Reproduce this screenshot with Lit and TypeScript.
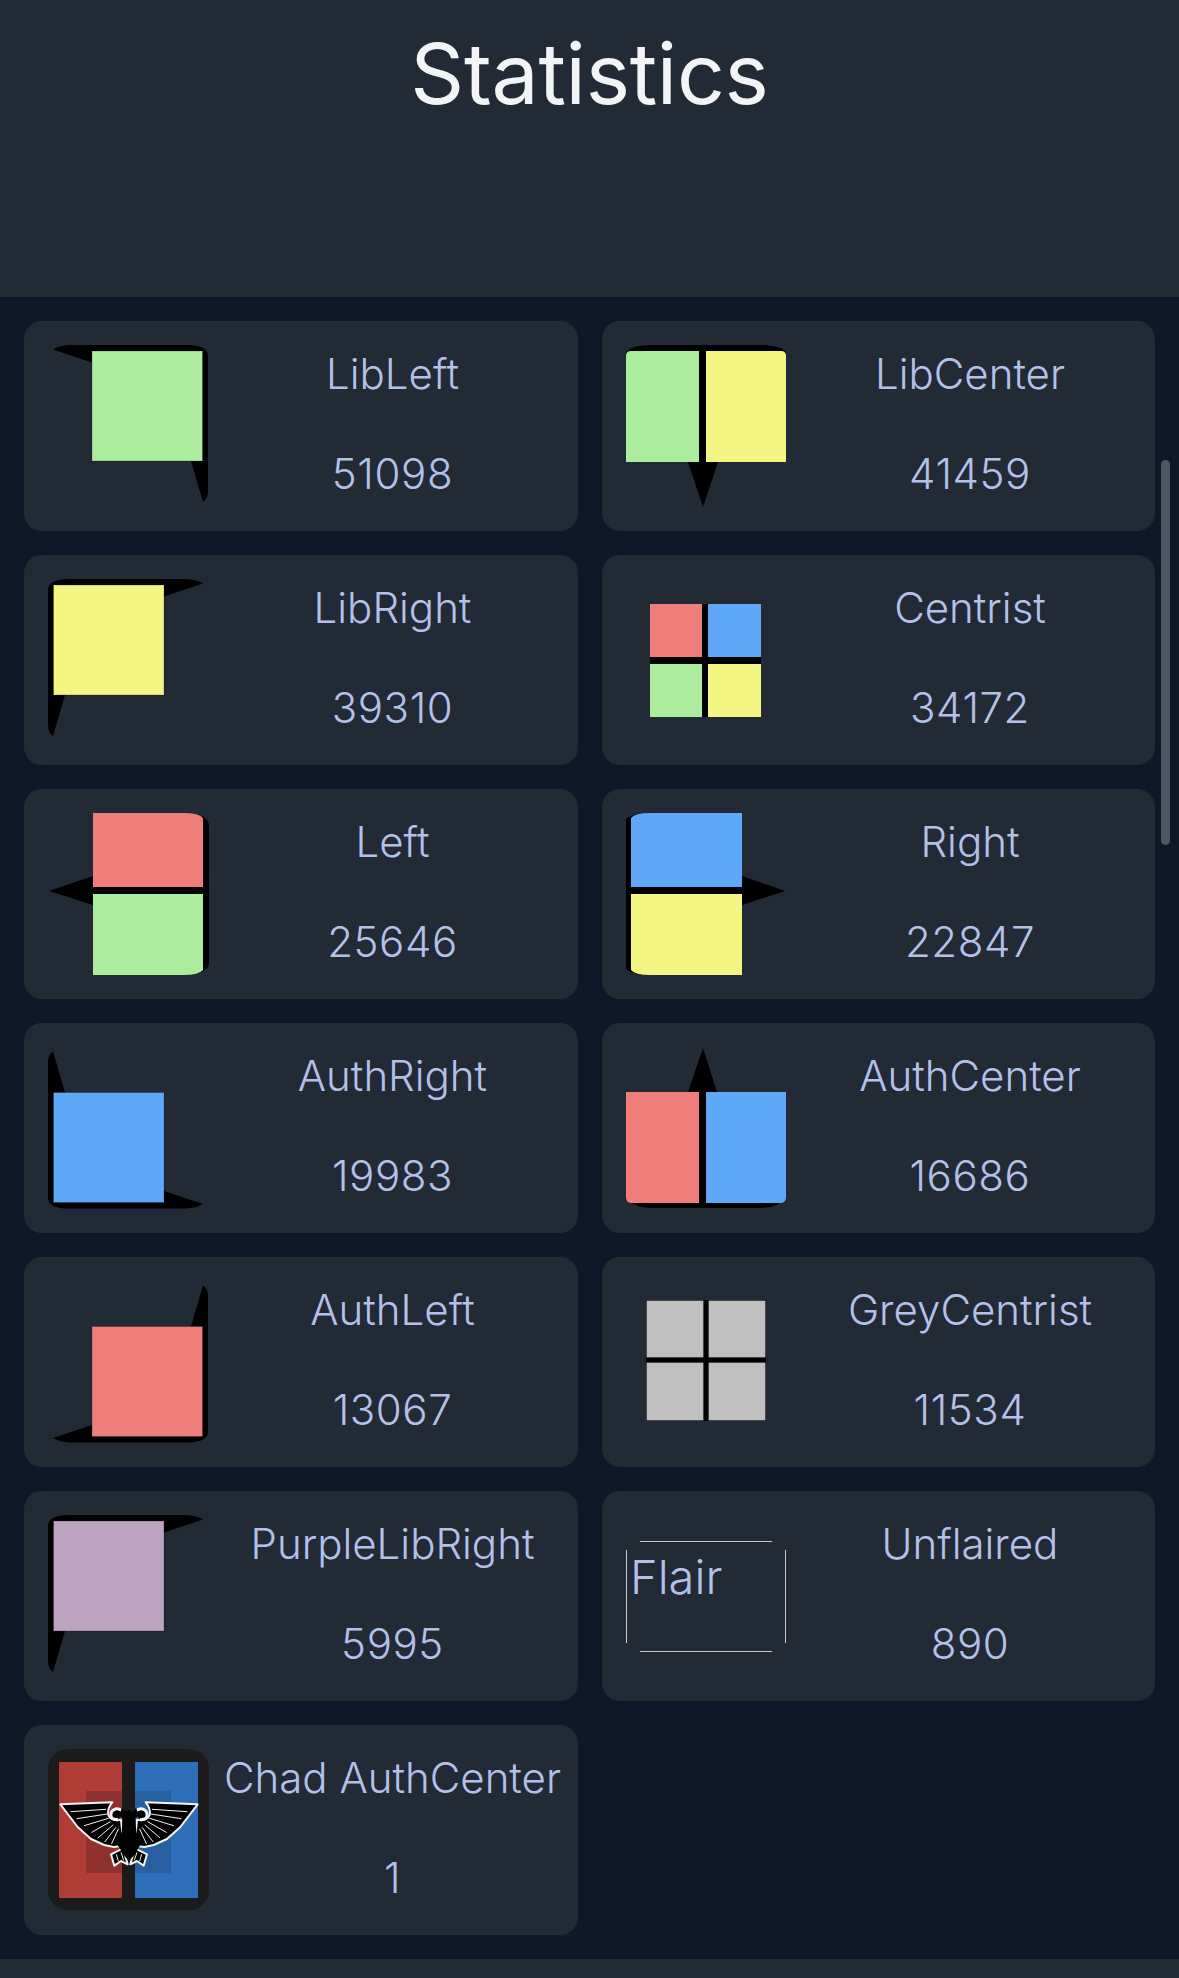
import { LitElement, html, css, svg } from "lit";
import { customElement } from "lit/decorators.js";

const G = "#acec9e", Y = "#f5f583", R = "#ef7e7a", B = "#5fa8f8", GREY = "#c0c0c0", P = "#bda2c2";
const EDGE = "rgba(0,0,0,.22)";

const rect = (x: number, y: number, w: number, h: number, fill: string, extra = "") =>
  svg`<rect x=${x + 0.5} y=${y + 0.5} width=${w - 1} height=${h - 1} fill=${fill} stroke=${extra || EDGE} stroke-width="1" />`;

/* A single square with a black corner frame; flips give the four quadrants. */
const corner = (fill: string, flipX: boolean, flipY: boolean) => {
  const t = `translate(${flipX ? 160 : 0} ${flipY ? 161.5 : 0}) scale(${flipX ? -1 : 1} ${flipY ? -1 : 1})`;
  return svg`<g transform=${t}>
    <path d="M0 147 L0 10 Q1 1 18 0 L139 0 Q150 1 155 4.5 L116 17.5 L100 40 L40 100 L17 116 L5 157 Q0 153 0 147 Z" fill="#000" />
    ${rect(5, 5.5, 111.5, 111, fill)}
  </g>`;
};

const icons: Record<string, () => unknown> = {
  libLeft: () => corner(G, true, false),
  libRight: () => corner(Y, false, false),
  authRight: () => corner(B, false, true),
  authLeft: () => corner(R, true, true),
  purple: () => corner(P, false, false),
  libCenter: () => svg`
    <path d="M0 8 Q3 1 23 0 L137 0 Q157 1 160 8 L160 40 L0 40 Z" fill="#000" />
    <rect x="73" y="30" width="7" height="90" fill="#000" />
    <path d="M62 117 L92 117 L77 162 Z" fill="#000" />
    <path d="M0 11 Q0 6 5 6 L73 6 L73 117 L0 117 Z" fill=${G} />
    <path d="M80 6 L155 6 Q160 6 160 11 L160 117 L80 117 Z" fill=${Y} />`,
  authCenter: () => svg`
    <path d="M1 150 Q6 160 24 161 L136 161 Q154 160 159 150 Z" fill="#000" />
    <rect x="73" y="40" width="7" height="120" fill="#000" />
    <path d="M62 45 L91 45 L77 1 Z" fill="#000" />
    <path d="M0 45 L73 45 L73 156 L6 156 Q0 156 0 150 Z" fill=${R} />
    <path d="M80 45 L160 45 L160 150 Q160 156 154 156 L80 156 Z" fill=${B} />`,
  left: () => svg`
    <path d="M45 0 L138 0 Q160 1 161 12 L161 150 Q160 161 138 162 L45 162 Z" fill="#000" />
    <path d="M1 78 L45 63 L45 92 Z" fill="#000" />
    <path d="M45 0 L136 0 Q151 0 155 5 L155 74 L45 74 Z" fill=${R} />
    <path d="M45 81 L155 81 L155 157 Q151 162 136 162 L45 162 Z" fill=${G} />`,
  right: () => svg`
    <path d="M116 0 L24 0 Q2 1 0 7 L0 155 Q2 161 24 162 L116 162 Z" fill="#000" />
    <path d="M116 63 L159 78 L116 92 Z" fill="#000" />
    <path d="M116 0 L24 0 Q9 0 5 5 L5 74 L116 74 Z" fill=${B} />
    <path d="M116 81 L5 81 L5 157 Q9 162 24 162 L116 162 Z" fill=${Y} />`,
  centrist: () => svg`
    <rect x="24" y="25" width="111" height="113" fill="#000" />
    <rect x="24" y="25" width="52" height="53" fill=${R} />
    <rect x="82" y="25" width="53" height="53" fill=${B} />
    <rect x="24" y="85" width="52" height="53" fill=${G} />
    <rect x="82" y="85" width="53" height="53" fill=${Y} />`,
  grey: () => svg`
    <rect x="20" y="19" width="120" height="121" fill="#000" />
    ${rect(20, 19, 58, 58, GREY, "rgba(34,41,54,.45)")}
    ${rect(82, 19, 58, 58, GREY, "rgba(34,41,54,.45)")}
    ${rect(20, 81, 58, 59, GREY, "rgba(34,41,54,.45)")}
    ${rect(82, 81, 58, 59, GREY, "rgba(34,41,54,.45)")}`,
  chad: () => svg`
    <rect x="0" y="0" width="161" height="161" rx="20" fill="#1b1b1c" />
    <rect x="11" y="13" width="63" height="136" fill="#b03c36" />
    <rect x="87" y="13" width="63" height="136" fill="#2e6db8" />
    <rect x="38" y="42" width="36" height="82" fill="#8f322d" />
    <rect x="74" y="42" width="13" height="82" fill="#1b1b1c" />
    <rect x="87" y="42" width="36" height="82" fill="#28609f" />
    <g transform="translate(7 46) scale(.3333)">
      ${[0, 1].map(
        (m) => svg`<g transform=${m ? "translate(444 0) scale(-1 1)" : ""}>
          <path d="M16 28 L172 22 Q156 40 160 60 Q168 80 198 74 L206 152 L176 156 L148 150 L108 132 L68 96 Z"
            fill="#000" stroke="#f4f4f4" stroke-width="6" stroke-linejoin="round" />
          <g stroke="#f4f4f4" stroke-width="3" fill="none" stroke-linecap="round">
            <path d="M48 50 L152 43" /><path d="M66 71 L156 57" /><path d="M88 92 L160 70" />
            <path d="M110 112 L166 80" /><path d="M130 128 L174 90" /><path d="M150 140 L182 98" /><path d="M170 146 L190 102" />
          </g>
          <path d="M206 50 Q184 32 170 50 Q160 74 190 74" fill="#000" stroke="#f4f4f4" stroke-width="9" />
          <path d="M168 178 L204 160 L218 208 L198 198 L178 212 Z" fill="#000" stroke="#f4f4f4" stroke-width="6" stroke-linejoin="round" />
          <path d="M184 178 L190 198 M198 172 L206 196" stroke="#f4f4f4" stroke-width="3" />
        </g>`
      )}
      <path d="M222 44 L240 58 L244 110 L256 150 L236 182 L222 198 L208 182 L188 150 L200 110 L204 58 Z" fill="#000" />
      <path d="M200 38 L222 58 L244 38 L250 64 L222 80 L194 64 Z" fill="#000" />
    </g>`,
};

const stats: [string, string, string][] = [
  ["LibLeft", "51098", "libLeft"],
  ["LibCenter", "41459", "libCenter"],
  ["LibRight", "39310", "libRight"],
  ["Centrist", "34172", "centrist"],
  ["Left", "25646", "left"],
  ["Right", "22847", "right"],
  ["AuthRight", "19983", "authRight"],
  ["AuthCenter", "16686", "authCenter"],
  ["AuthLeft", "13067", "authLeft"],
  ["GreyCentrist", "11534", "grey"],
  ["PurpleLibRight", "5995", "purple"],
  ["Unflaired", "890", "flair"],
  ["Chad AuthCenter", "1", "chad"],
];

@customElement("app-root")
export class AppRoot extends LitElement {
  static styles = css`
    :host {
      display: block;
      position: relative;
      width: 1179px;
      height: 1978px;
      overflow: hidden;
      background: #101728;
      font-family: Inter, "Liberation Sans", sans-serif;
    }
    .header {
      height: 297px;
      background: #222a36;
      text-align: center;
      box-sizing: border-box;
      padding-top: 20px;
    }
    h1 {
      margin: 0;
      font-size: 84px;
      line-height: 108px;
      font-weight: 400;
      letter-spacing: -0.3px;
      color: #f3f4f6;
    }
    .grid {
      display: grid;
      grid-template-columns: 554px 553px;
      gap: 24px;
      padding: 24px;
    }
    .card {
      height: 210px;
      background: #222a36;
      border-radius: 18px;
      display: flex;
    }
    .icon {
      flex: none;
      width: 160px;
      height: 163px;
      margin: 24px 0 0 24px;
      display: block;
      overflow: visible;
    }
    .text {
      flex: 1;
      min-width: 0;
      display: flex;
      flex-direction: column;
      align-items: center;
      gap: 52px;
      padding: 29px 1px 0 0;
      color: #b3c1e8;
      font-size: 42px;
      line-height: 48px;
      font-weight: 300;
      white-space: nowrap;
    }
    .value {
      letter-spacing: 0.6px;
    }
    .flair {
      flex: none;
      position: relative;
      width: 160px;
      height: 111px;
      margin: 50px 0 0 24px;
      box-sizing: border-box;
      padding: 8px 0 0 4px;
      color: #b3c1e8;
      font-size: 47px;
      line-height: 56px;
      font-weight: 300;
    }
    .flair::before,
    .flair::after {
      content: "";
      position: absolute;
      border: 0 solid #c6c9cd;
    }
    .flair::before {
      inset: 0 14px;
      border-width: 1px 0;
    }
    .flair::after {
      inset: 9px 0;
      border-width: 0 1px;
    }
    .thumb {
      position: absolute;
      left: 1161px;
      top: 460px;
      width: 9px;
      height: 385px;
      border-radius: 5px;
      background: #4f5663;
    }
    .footer {
      height: 19px;
      background: #222a36;
    }
  `;

  render() {
    return html`
      <div class="header"><h1>Statistics</h1></div>
      <div class="grid">
        ${stats.map(
          ([name, value, icon]) => html`
            <div class="card">
              ${icon === "flair"
                ? html`<div class="flair">Flair</div>`
                : html`<svg class="icon" viewBox="0 0 160 163">${icons[icon]()}</svg>`}
              <div class="text"><span>${name}</span><span class="value">${value}</span></div>
            </div>
          `
        )}
      </div>
      <div class="footer"></div>
      <div class="thumb"></div>
    `;
  }
}
